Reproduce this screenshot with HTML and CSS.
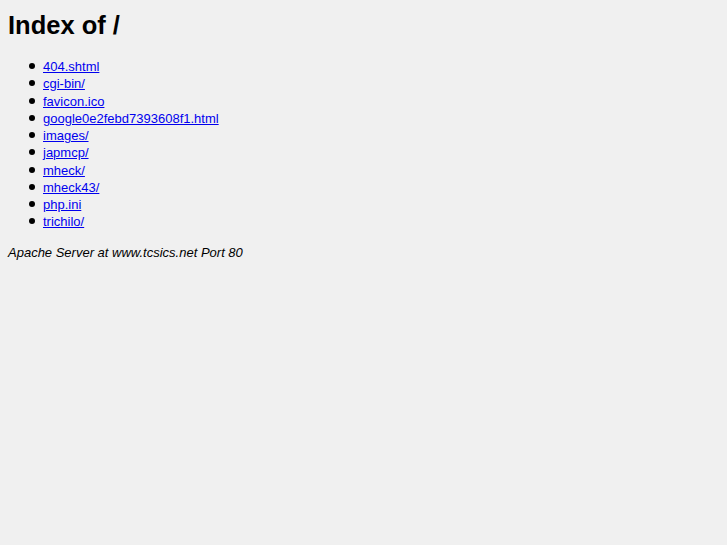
FILE: index.html
```html
<!DOCTYPE html>
<html>
<head>
<meta charset="utf-8">
<title>Index of /</title>
<link rel="stylesheet" href="styles.css">
</head>
<body>
<h1 class="title">Index of /</h1>
<ul class="listing">
<li><a href="#">404.shtml</a></li>
<li><a href="#">cgi-bin/</a></li>
<li><a href="#">favicon.ico</a></li>
<li><a href="#">google0e2febd7393608f1.html</a></li>
<li><a href="#">images/</a></li>
<li><a href="#">japmcp/</a></li>
<li><a href="#">mheck/</a></li>
<li><a href="#">mheck43/</a></li>
<li><a href="#">php.ini</a></li>
<li><a href="#">trichilo/</a></li>
</ul>
<address class="sig">Apache Server at www.tcsics.net Port 80</address>
</body>
</html>
```
FILE: styles.css
```css
html { background: #f0f0f0; }
body {
  margin: 0;
  padding: 8px;
  font-family: "Liberation Sans", Arial, sans-serif;
  font-size: 13px;
  line-height: 17px;
  color: #000;
}
.title {
  margin: 2px 0 0;
  font-size: 25.5px;
  line-height: 30px;
  font-weight: bold;
}
.listing {
  margin: 18px 0 0;
  padding-left: 35px;
  list-style: none;
}
.listing li {
  position: relative;
  line-height: 17.25px;
}
.listing li::before {
  content: "";
  position: absolute;
  left: -14px;
  top: 5px;
  width: 6px;
  height: 6px;
  border-radius: 50%;
  background: #000;
}
.listing a { color: #0000ee; }
.sig {
  margin-top: 13px;
  font-style: italic;
}
```
